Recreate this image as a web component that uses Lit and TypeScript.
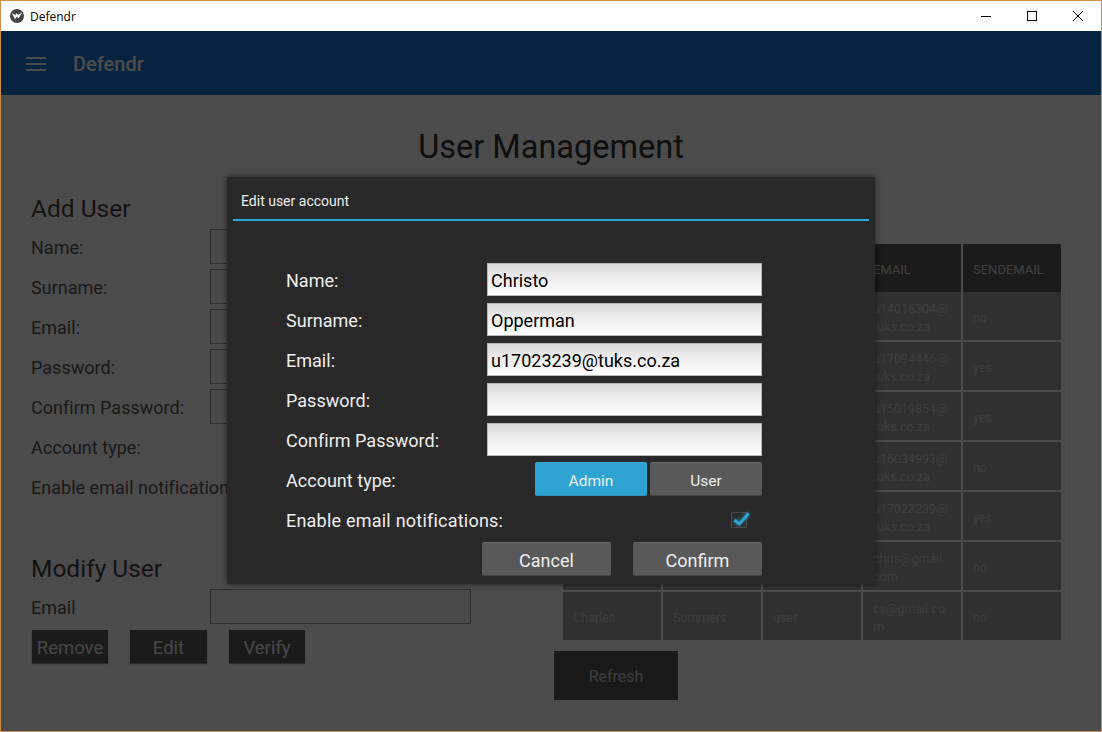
import { LitElement, html, css } from "lit";
import { customElement } from "lit/decorators.js";

const addLabels = ["Name:", "Surname:", "Email:", "Password:", "Confirm Password:"];

// line breaks in the addresses are where the narrow table column wraps them
const users = [
  ["Johan", "Smit", "admin", "u14016304@\ntuks.co.za", "no"],
  ["Tegan", "Carton", "admin", "u17094446@\ntuks.co.za", "yes"],
  ["Ruan", "Klein", "admin", "u15019854@\ntuks.co.za", "yes"],
  ["Jason", "Evans", "admin", "u15034993@\ntuks.co.za", "no"],
  ["Christo", "Opperman", "admin", "u17023239@\ntuks.co.za", "yes"],
  ["Chris", "Jones", "user", "chris@gmail.\ncom", "no"],
  ["Charles", "Summers", "user", "cs@gmail.co\nm", "no"],
];

@customElement("app-root")
export class AppRoot extends LitElement {
  static styles = css`
    :host {
      display: block;
      width: 1102px;
      height: 732px;
      box-sizing: border-box;
      border: 1px solid #d08e4a;
      font-family: Roboto, "Liberation Sans", sans-serif;
      overflow: hidden;
      background: #fff;
    }
    .titlebar {
      display: flex;
      align-items: center;
      height: 30px;
      background: #fff;
      font: 12px "Open Sans", "Noto Sans", sans-serif;
      color: #000;
    }
    .titlebar .logo {
      margin: 0 6px 0 9px;
    }
    .titlebar .name {
      flex: 1;
    }
    .winbtn {
      display: flex;
      align-items: center;
      justify-content: center;
      width: 46px;
      height: 30px;
    }
    .stage {
      position: relative;
      height: 700px;
      background: #fff;
      overflow: hidden;
    }
    .appbar {
      display: flex;
      align-items: center;
      height: 64px;
      background: #1976d2;
      color: #fff;
      font-size: 20px;
      font-weight: 500;
    }
    .appbar svg {
      margin: 2px 27px 0 25px;
    }
    .appbar span {
      padding-top: 2px;
    }
    h1 {
      margin: 0;
      padding-top: 32px;
      height: 40px;
      line-height: 41px;
      text-align: center;
      font-size: 32.5px;
      font-weight: 400;
      color: #333;
    }
    .columns {
      display: flex;
      padding: 26px 0 0 30px;
    }
    .left {
      width: 440px;
      flex: none;
      white-space: nowrap;
    }
    h2 {
      margin: 0 0 5px;
      height: 30px;
      line-height: 32px;
      font-size: 24.5px;
      font-weight: 400;
      color: #444;
    }
    .row {
      display: grid;
      grid-template-columns: 179px 261px;
      height: 40px;
      font-size: 18px;
      line-height: 39px;
      letter-spacing: 0.02px;
      color: #555;
    }
    .row .field {
      box-sizing: border-box;
      height: 35px;
      margin-top: 1px;
      border: 1px solid #999;
      background: #f8f8f8;
    }
    .modify {
      margin-top: 45px;
    }
    .actions {
      display: flex;
      gap: 22px;
      margin-top: 2px;
      padding-left: 1px;
    }
    .dim-btn {
      box-sizing: border-box;
      width: 76px;
      height: 33px;
      line-height: 36px;
      text-align: center;
      font-size: 18.5px;
      color: #eee;
      background: #5d5d5d;
      box-shadow: 0 1px 1px rgba(0, 0, 0, 0.4);
    }
    .dim-btn.wide {
      width: 77px;
    }
    .right {
      flex: 1;
      padding: 51px 0 0 92px;
    }
    .table-wrap {
      display: flex;
    }
    .table {
      width: 498px;
      font-size: 12.5px;
    }
    .tr {
      display: grid;
      grid-template-columns: repeat(5, 98px);
      column-gap: 2px;
      height: 48px;
      margin-bottom: 2px;
    }
    .tr.header {
      margin-bottom: 0;
    }
    .head {
      display: flex;
      align-items: center;
      padding: 2px 0 0 10px;
      background: #5d5d5d;
      color: #d8d8d8;
      font-size: 13px;
    }
    .cell {
      display: flex;
      align-items: center;
      padding: 4px 0 0 10px;
      background: #a4a4a4;
      color: #cfcfcf;
      line-height: 18px;
      white-space: pre-line;
    }
    .track {
      width: 1px;
      height: 357px;
      margin: 39px 0 0 8px;
      background: #f0f0f0;
    }
    .refresh {
      box-sizing: border-box;
      width: 124px;
      height: 49px;
      margin: 9px 0 0 -9px;
      line-height: 52px;
      text-align: center;
      font-size: 16px;
      color: #cfcfcf;
      background: #585858;
    }
    .scrim {
      position: absolute;
      inset: 0;
      background: rgba(0, 0, 0, 0.7);
    }
    .dialog {
      position: absolute;
      left: 226px;
      top: 146px;
      width: 648px;
      height: 407px;
      box-sizing: border-box;
      padding: 0 6px;
      background: #292929;
      color: #eee;
      box-shadow: 0 0 6px rgba(0, 0, 0, 0.6);
    }
    .dialog-title {
      height: 42px;
      line-height: 48px;
      padding-left: 8px;
      font-size: 14px;
      border-bottom: 2px solid #29a8d8;
    }
    .form {
      padding: 42px 0 0 53px;
    }
    .form-row {
      display: grid;
      grid-template-columns: 201px 275px;
      height: 40px;
      font-size: 18px;
      align-items: start;
      white-space: nowrap;
    }
    .form-row label {
      line-height: 36px;
      letter-spacing: 0.02px;
    }
    .form-row label.long {
      letter-spacing: 0.22px;
    }
    .form-row input {
      box-sizing: border-box;
      width: 275px;
      height: 33px;
      margin: 0;
      padding: 1px 3px 0;
      border: 1px solid #b8b8b8;
      border-radius: 0;
      outline: none;
      background: linear-gradient(#dcdcdc, #fff);
      font: 18px Roboto, sans-serif;
      color: #000;
    }
    .toggle {
      display: flex;
      justify-content: flex-end;
      gap: 3px;
      margin-top: -1px;
    }
    .toggle div {
      box-sizing: border-box;
      width: 112px;
      height: 34px;
      line-height: 36px;
      text-align: center;
      font-size: 15.5px;
      border-radius: 2px;
      background: #595959;
      border-top: 1px solid #666;
      border-bottom: 1px solid #444;
    }
    .toggle .on {
      background: #2fa4d3;
      border-top-color: #35a9d8;
      border-bottom-color: #2a8fb8;
    }
    .check {
      display: flex;
      justify-content: flex-end;
      padding-right: 11px;
      margin-top: -1px;
    }
    .check path {
      filter: drop-shadow(0 0 2px rgba(47, 164, 211, 0.7));
    }
    .buttons {
      display: flex;
      justify-content: flex-end;
      gap: 22px;
      width: 476px;
      margin-top: -1px;
    }
    .buttons div {
      box-sizing: border-box;
      width: 129px;
      height: 34px;
      line-height: 36px;
      text-align: center;
      font-size: 18px;
      border-radius: 2px;
      background: #595959;
      border-top: 1px solid #666;
      border-bottom: 1px solid #444;
    }
  `;

  render() {
    return html`
      <div class="titlebar">
        <svg class="logo" width="14" height="14" viewBox="0 0 14 14">
          <circle cx="7" cy="7" r="7" fill="#444"></circle>
          <path
            d="M2.4 4.6 L5 10 L7 7.6 L8.4 9 L11.8 4 L8 6 L6.4 4.6 L5.6 6.4 Z"
            fill="#fff"
            stroke="#fff"
            stroke-width="0.4"
          ></path>
        </svg>
        <span class="name">Defendr</span>
        <div class="winbtn">
          <svg width="10" height="10" viewBox="0 0 10 10"><path d="M0 5.5H10" stroke="#000" fill="none"></path></svg>
        </div>
        <div class="winbtn">
          <svg width="10" height="10" viewBox="0 0 10 10"><rect x="0.5" y="0.5" width="9" height="9" stroke="#000" fill="none"></rect></svg>
        </div>
        <div class="winbtn">
          <svg width="10" height="10" viewBox="0 0 10 10"><path d="M0 0L10 10M10 0L0 10" stroke="#000" fill="none"></path></svg>
        </div>
      </div>
      <div class="stage">
        <div class="appbar">
          <svg width="20" height="14" viewBox="0 0 20 14">
            <path d="M0 1H20M0 7H20M0 13H20" stroke="#fff" stroke-width="2" fill="none"></path>
          </svg>
          <span>Defendr</span>
        </div>
        <h1>User Management</h1>
        <div class="columns">
          <div class="left">
            <h2>Add User</h2>
            ${addLabels.map((l) => html`<div class="row"><span>${l}</span><div class="field"></div></div>`)}
            <div class="row"><span>Account type:</span></div>
            <div class="row"><span>Enable email notifications:</span></div>
            <h2 class="modify">Modify User</h2>
            <div class="row"><span>Email</span><div class="field"></div></div>
            <div class="actions">
              <div class="dim-btn">Remove</div>
              <div class="dim-btn wide">Edit</div>
              <div class="dim-btn">Verify</div>
            </div>
          </div>
          <div class="right">
            <div class="table-wrap">
              <div class="table">
                <div class="tr header">
                  ${["NAME", "SURNAME", "TYPE", "EMAIL", "SENDEMAIL"].map((h) => html`<div class="head">${h}</div>`)}
                </div>
                ${users.map((u) => html`<div class="tr">${u.map((v) => html`<div class="cell">${v}</div>`)}</div>`)}
              </div>
              <div class="track"></div>
            </div>
            <div class="refresh">Refresh</div>
          </div>
        </div>
        <div class="scrim"></div>
        <div class="dialog">
          <div class="dialog-title">Edit user account</div>
          <div class="form">
            <div class="form-row"><label>Name:</label><input value="Christo" /></div>
            <div class="form-row"><label>Surname:</label><input value="Opperman" /></div>
            <div class="form-row"><label>Email:</label><input value="u17023239@tuks.co.za" /></div>
            <div class="form-row"><label>Password:</label><input /></div>
            <div class="form-row"><label>Confirm Password:</label><input /></div>
            <div class="form-row">
              <label>Account type:</label>
              <div class="toggle"><div class="on">Admin</div><div>User</div></div>
            </div>
            <div class="form-row">
              <label class="long">Enable email notifications:</label>
              <div class="check">
                <svg width="20" height="30" viewBox="0 0 20 30">
                  <rect x="0.5" y="10.5" width="15" height="15" fill="#2b2b2b" stroke="#4a4a4a"></rect>
                  <path d="M3.3 18 L8.3 22 L17.7 11.3" fill="none" stroke="#2fa4d3" stroke-width="3"></path>
                </svg>
              </div>
            </div>
            <div class="buttons"><div>Cancel</div><div>Confirm</div></div>
          </div>
        </div>
      </div>
    `;
  }
}
